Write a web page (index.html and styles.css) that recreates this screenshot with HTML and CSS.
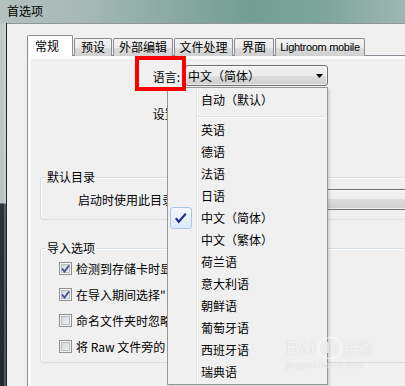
FILE: index.html
```html
<html>
  <head>
    <title>首选项</title>
    <meta charset="utf-8">
    <link rel="stylesheet" href="styles.css">
  </head>
  <body>
    <div class="window">
      <div class="titlebar">首选项</div>
      <div class="frame">
        <div class="frame-left"></div>
        <div class="client">
          <div class="tabs">
            <div class="tab tab-active">常规</div>
            <div class="tab tab-presets">预设</div>
            <div class="tab tab-external">外部编辑</div>
            <div class="tab tab-files">文件处理</div>
            <div class="tab tab-ui">界面</div>
            <div class="tab tab-mobile">Lightroom mobile</div>
          </div>
          <div class="panel">
            <div class="page">
              <div class="field-row lang-row">
                <span class="field-label lang-label">语言:</span>
                <div class="combo combo-lang">
                  <span class="combo-text">中文（简体）</span>
                  <svg class="combo-arrow" width="7" height="4" viewBox="0 0 7 4"><polygon points="0,0 7,0 3.5,4" /></svg>
                  <ul class="dropdown">
                    <li>自动（默认）</li>
                    <li class="sep"></li>
                    <li>英语</li>
                    <li>德语</li>
                    <li>法语</li>
                    <li>日语</li>
                    <li class="checked">
                      <span class="mark"><svg width="22" height="22" viewBox="0 0 22 22"><path d="M5.8 11.2 L8.8 14.8 L15.8 6.6" /></svg></span>中文（简体）
                    </li>
                    <li>中文（繁体）</li>
                    <li>荷兰语</li>
                    <li>意大利语</li>
                    <li>朝鲜语</li>
                    <li>葡萄牙语</li>
                    <li>西班牙语</li>
                    <li>瑞典语</li>
                  </ul>
                </div>
              </div>
              <div class="field-row settings-row">
                <span class="field-label">设置:</span>
              </div>

              <fieldset class="group group-catalog">
                <legend>默认目录</legend>
                <div class="group-row">
                  <span class="group-label">启动时使用此目录:</span>
                  <div class="combo combo-catalog">
                    <span class="combo-text">载入最近的目录</span>
                  </div>
                </div>
              </fieldset>

              <fieldset class="group group-import">
                <legend>导入选项</legend>
                <label class="check import-row"><span class="cb cb-on"><svg width="11" height="11" viewBox="0 0 11 11"><path d="M2 5.5 L4.5 8.5 L9 2.5" /></svg></span>检测到存储卡时显示导入对话框</label>
                <label class="check import-row"><span class="cb cb-on"><svg width="11" height="11" viewBox="0 0 11 11"><path d="M2 5.5 L4.5 8.5 L9 2.5" /></svg></span>在导入期间选择"当前/上一次导入"收藏夹</label>
                <label class="check import-row"><span class="cb"></span>命名文件夹时忽略空格字符</label>
                <label class="check import-row"><span class="cb"></span>将 Raw 文件旁的 .JPG 文件视为单独的照片</label>
              </fieldset>
            </div>
          </div>
        </div>
      </div>

      <div class="highlight"></div>

      <div class="watermark">
        <div class="wm-logo">Bai<span class="wm-du">du</span><span class="wm-cn">经验</span></div>
        <div class="wm-url">jingyan.baidu.com</div>
      </div>
    </div>
  </body>
</html>
```

FILE: styles.css
```css
body {
  margin: 0;
  width: 405px;
  height: 386px;
  overflow: hidden;
  background: #f0f0f0;
  font-family: "Noto Sans CJK SC", sans-serif;
  font-size: 12px;
  color: #000;
}

.window {
  position: relative;
  height: 386px;
  overflow: hidden;
}

.titlebar {
  height: 23px;
  line-height: 21px;
  padding-left: 7px;
  box-sizing: border-box;
  background: linear-gradient(90deg, #b3c1bf 0%, #a5b8b4 22%, #86a89f 45%, #739d92 62%, #7ea59b 80%, #9db8b1 100%);
}

.frame {
  display: flex;
  height: 363px;
}

.frame-left {
  width: 6px;
  flex: none;
  border-right: 1px solid #1c2226;
  background: linear-gradient(#c4c8c8 0, #bcc1c1 180px, #2a343a 181px, #1f2930 100%);
  box-shadow: inset -2px 0 rgba(255, 255, 255, 0.22);
}

.client {
  flex: 1;
  border-top: 1px solid #8f9699;
  padding: 11px 0 0 20px;
}

/* tabs */
.tabs {
  display: flex;
  align-items: flex-end;
  gap: 1px;
  height: 21px;
  margin-bottom: -1px;
}

.tab {
  height: 18px;
  box-sizing: border-box;
  border: 1px solid #898c95;
  border-bottom: 0;
  border-radius: 2px 2px 0 0;
  background: linear-gradient(#f3f3f3, #ebebeb 50%, #dddddd 50%, #d0d0d0);
  text-align: center;
  line-height: 16px;
  flex: none;
}

.tab-active {
  height: 21px;
  width: 46px;
  background: #fff;
  position: relative;
  z-index: 1;
  text-align: left;
  padding-left: 7px;
  line-height: 20px;
}

.tab-presets { width: 38px; }
.tab-external { width: 60px; }
.tab-files { width: 59px; }
.tab-ui { width: 40px; }

.tab-mobile {
  width: 90px;
  font-family: "Liberation Sans", Arial, sans-serif;
  font-size: 11px;
  letter-spacing: -0.3px;
}

.panel {
  border: 1px solid #898c95;
  border-right: 0;
  background: #fcfcfc;
  padding: 3px 0 0 3px;
  margin-right: -40px;
}

.page {
  background: #f0f0f0;
  height: 340px;
  padding-top: 6px;
  box-sizing: border-box;
}

/* rows */
.field-row {
  display: flex;
  height: 21px;
  align-items: center;
}

.field-label {
  width: 149px;
  flex: none;
  text-align: right;
  line-height: 21px;
}

.lang-label {
  padding-top: 2px;
  box-sizing: border-box;
}

.settings-row {
  margin-top: 17px;
  margin-bottom: 46px;
}

.combo {
  height: 21px;
  box-sizing: border-box;
  border: 1px solid #707070;
  border-radius: 3px;
  background: linear-gradient(#f2f2f2, #ebebeb 50%, #dddddd 50%, #cfcfcf);
  box-shadow: inset 0 0 0 1px rgba(255, 255, 255, 0.6);
  display: flex;
  align-items: center;
  flex: none;
}

.combo-lang {
  width: 143px;
  margin-left: 5px;
  position: relative;
  padding: 0 4px 0 2px;
}

.combo-text {
  flex: 1;
  line-height: 19px;
  white-space: nowrap;
}

.combo-arrow {
  fill: #000;
  margin-top: 1px;
}

.dropdown {
  position: absolute;
  left: -19px;
  top: 21px;
  z-index: 10;
  width: 161px;
  box-sizing: border-box;
  margin: 0;
  padding: 1px 0;
  list-style: none;
  border: 1px solid #979797;
  background: linear-gradient(90deg, #f1f1f1 28px, #e2e3e3 28px, #e2e3e3 29px, #ffffff 29px, #ffffff 30px, #f0f0f0 30px);
  box-shadow: 2px 2px 2px rgba(0, 0, 0, 0.12);
}

.dropdown li {
  height: 22px;
  line-height: 22px;
  padding-left: 33px;
  white-space: nowrap;
}

.dropdown .sep {
  height: 8px;
  padding: 0;
  margin: 0 2px 0 29px;
  background: linear-gradient(transparent 5px, #e0e0e0 5px, #e0e0e0 6px, #ffffff 6px, #ffffff 7px, transparent 7px);
}

.dropdown .checked {
  display: flex;
  align-items: center;
  padding-left: 2px;
}

.mark {
  width: 22px;
  height: 22px;
  box-sizing: border-box;
  margin-right: 9px;
  border: 1px solid #a9c8ec;
  border-radius: 3px;
  background: linear-gradient(#f3f8fe, #dde9f8);
  display: flex;
}

.mark svg {
  margin: -1px;
}

.mark path {
  fill: none;
  stroke: #1b2a88;
  stroke-width: 2.1;
}

/* checkboxes */
.check {
  display: flex;
  align-items: center;
  white-space: nowrap;
}

.cb {
  width: 13px;
  height: 13px;
  box-sizing: border-box;
  flex: none;
  margin-right: 4px;
  border: 1px solid #8e8f8f;
  background: linear-gradient(135deg, #cdd1d6, #f7f7f7);
  box-shadow: inset 0 0 0 1px #f4f4f4, inset 0 0 0 2px #b9bdc2;
  display: flex;
}

.cb path {
  fill: none;
  stroke: #3a4f95;
  stroke-width: 1.8;
}

/* group boxes */
.group {
  margin: 0 0 0 9px;
  padding: 0 0 0 5px;
  min-width: 0;
  border: 1px solid #d5dfe5;
  border-radius: 3px;
  box-shadow: inset 1px 1px #fff;
}

.group legend {
  padding: 0 1px;
  line-height: 14px;
}

.group-catalog {
  padding-top: 5px;
  padding-bottom: 9px;
}

.group-row {
  display: flex;
  align-items: center;
  margin-left: 32px;
  height: 21px;
}

.group-label {
  flex: none;
  white-space: nowrap;
}

.combo-catalog {
  width: 260px;
  margin-left: 7px;
  padding-left: 3px;
}

.group-import {
  margin-top: 21px;
  padding-bottom: 3px;
}

.import-row {
  height: 26px;
  margin-left: 13px;
}

/* annotation */
.highlight {
  position: absolute;
  left: 135px;
  top: 56px;
  width: 51px;
  height: 35px;
  box-sizing: border-box;
  border: 4px solid #ff0000;
  z-index: 20;
}

.watermark {
  position: absolute;
  left: 286px;
  top: 336px;
  z-index: 30;
  color: rgba(255, 255, 255, 0.75);
  text-shadow: 0 0 1px rgba(0, 0, 0, 0.18);
  font-family: "Liberation Sans", Arial, sans-serif;
}

.wm-logo {
  font-size: 19px;
  font-weight: bold;
  line-height: 24px;
  display: flex;
  align-items: center;
}

.wm-du {
  display: inline-block;
  width: 24px;
  height: 22px;
  border-radius: 11px;
  border: 1px solid rgba(255, 255, 255, 0.75);
  font-size: 15px;
  line-height: 20px;
  text-align: center;
  margin: 0 2px;
  box-sizing: border-box;
}

.wm-cn {
  font-family: "Noto Sans CJK SC", sans-serif;
  font-size: 15px;
}

.wm-url {
  font-size: 9px;
  line-height: 10px;
  letter-spacing: 0.3px;
}
```
